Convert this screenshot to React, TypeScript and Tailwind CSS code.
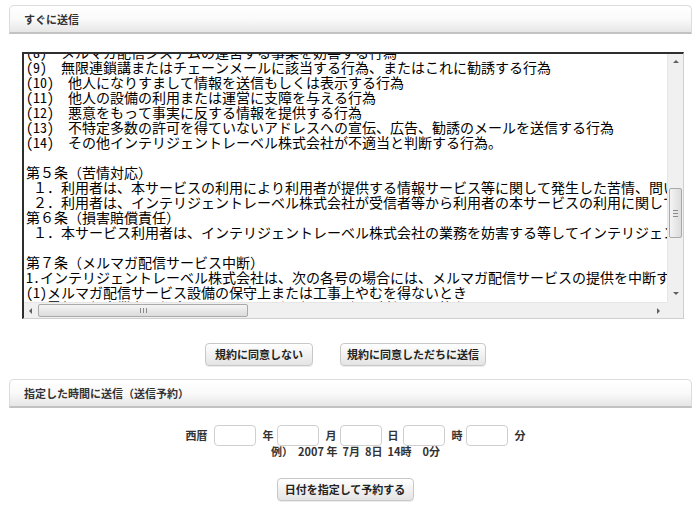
import React from 'react'

const lines: string[] = [
  '(8)　メルマガ配信システムの運営する事業を妨害する行為',
  '(9)　無限連鎖講またはチェーンメールに該当する行為、またはこれに勧誘する行為',
  '(10)　他人になりすまして情報を送信もしくは表示する行為',
  '(11)　他人の設備の利用または運営に支障を与える行為',
  '(12)　悪意をもって事実に反する情報を提供する行為',
  '(13)　不特定多数の許可を得ていないアドレスへの宣伝、広告、勧誘のメールを送信する行為',
  '(14)　その他インテリジェントレーベル株式会社が不適当と判断する行為。',
  '',
  '第５条（苦情対応）',
  ' １．利用者は、本サービスの利用により利用者が提供する情報サービス等に関して発生した苦情、問い合わせ等については、自らの責任で対応するものとします。',
  ' ２．利用者は、インテリジェントレーベル株式会社が受信者等から利用者の本サービスの利用に関して苦情を受けた場合には、これに協力するものとします。',
  '第６条（損害賠償責任）',
  ' １．本サービス利用者は、インテリジェントレーベル株式会社の業務を妨害する等してインテリジェントレーベル株式会社に損害を与えた場合には、その損害を賠償するものとします。',
  '',
  '第７条（メルマガ配信サービス中断）',
  '1.インテリジェントレーベル株式会社は、次の各号の場合には、メルマガ配信サービスの提供を中断することがあります。',
  '(1)メルマガ配信サービス設備の保守上または工事上やむを得ないとき',
  '(2)電気通信事業者の都合によりメルマガ配信サービスが利用不可能なとき',
]

const SectionHeader = ({ title }: { title: string }) => (
  <div className="ml-[9px] mr-[8px] h-[29px] flex items-center pl-[14px] rounded-t-[5px] border border-[#dcdcdc] border-b-2 border-b-[#c2c2c2] bg-linear-to-b from-white via-[#fafafa] to-[#e6e6e6] text-[11px] font-bold text-[#333]">
    {title}
  </div>
)

const Arrow = ({ dir }: { dir: 'up' | 'down' | 'left' | 'right' }) => {
  const pts = {
    up: '1,5 4,2 7,5',
    down: '1,2 4,5 7,2',
    left: '5,1 2,4 5,7',
    right: '2,1 5,4 2,7',
  }[dir]
  return (
    <svg width="8" height="8" viewBox="0 0 8 8">
      <polygon points={pts} fill="#606060" />
    </svg>
  )
}

const Button = ({ label, width }: { label: string; width: string }) => (
  <button
    className={`${width} h-[23px] rounded-[4px] border border-[#c8c8c8] bg-linear-to-b from-white to-[#e4e4e4] text-[11px] font-bold text-[#222] shadow-[0_1px_0_#ececec] flex items-center justify-center`}
  >
    {label}
  </button>
)

const DateInput = () => (
  <input className="w-[42px] h-[21px] rounded-[4px] border border-[#cfcfcf] bg-white outline-none" />
)

export default function App() {
  return (
    <div className="w-[700px] h-[511px] bg-white pt-[5px] font-['Noto_Sans_CJK_JP',sans-serif] text-[#333] overflow-hidden">
      <SectionHeader title="すぐに送信" />

      {/* 規約 textarea */}
      <div className="ml-[22px] mt-[18px] w-[662px] h-[267px] border-t-2 border-l-2 border-t-[#2e2e2e] border-l-[#2e2e2e] border-r border-b border-r-[#cfcfcf] border-b-[#cfcfcf] grid grid-cols-[1fr_16px] grid-rows-[1fr_16px] bg-white">
        <div className="overflow-hidden pl-[2px]">
          <div className="mt-[-9px] text-[14px] leading-[15px] text-black whitespace-pre font-['Noto_Sans_Mono_CJK_JP','Noto_Sans_CJK_JP',sans-serif]">
            {lines.map((l, i) => (
              <div key={i} className="h-[15px]">
                {l}
              </div>
            ))}
          </div>
        </div>

        {/* vertical scrollbar */}
        <div className="flex flex-col bg-[#f0f0f0] border-l border-[#e6e6e6]">
          <div className="h-[16px] flex items-center justify-center">
            <Arrow dir="up" />
          </div>
          <div className="h-[118px]" />
          <div className="h-[50px] mx-[1px] rounded-[2px] border border-[#a9a9a9] bg-linear-to-r from-[#f4f4f4] to-[#dcdcdc] flex items-center justify-center">
            <div className="flex flex-col gap-[2px]">
              <div className="w-[5px] h-px bg-[#8a8a8a]" />
              <div className="w-[5px] h-px bg-[#8a8a8a]" />
              <div className="w-[5px] h-px bg-[#8a8a8a]" />
            </div>
          </div>
          <div className="flex-1" />
          <div className="h-[16px] flex items-center justify-center">
            <Arrow dir="down" />
          </div>
        </div>

        {/* horizontal scrollbar */}
        <div className="flex bg-[#f0f0f0] border-t border-[#e6e6e6]">
          <div className="w-[14px] flex items-center justify-center">
            <Arrow dir="left" />
          </div>
          <div className="w-[210px] my-[1px] rounded-[2px] border border-[#a9a9a9] bg-linear-to-b from-[#f4f4f4] to-[#dcdcdc] flex items-center justify-center">
            <div className="flex gap-[2px]">
              <div className="w-px h-[5px] bg-[#8a8a8a]" />
              <div className="w-px h-[5px] bg-[#8a8a8a]" />
              <div className="w-px h-[5px] bg-[#8a8a8a]" />
            </div>
          </div>
          <div className="flex-1" />
          <div className="w-[16px] flex items-center justify-center">
            <Arrow dir="right" />
          </div>
        </div>
        <div className="bg-[#f0f0f0]" />
      </div>

      <div className="mt-[24px] flex justify-center gap-[27px] pr-[9px]">
        <Button label="規約に同意しない" width="w-[108px]" />
        <Button label="規約に同意しただちに送信" width="w-[146px]" />
      </div>

      <div className="mt-[13px]">
        <SectionHeader title="指定した時間に送信（送信予約）" />
      </div>

      <div className="mt-[17px] flex items-center justify-center pl-[11px] text-[11px] font-bold text-[#333]">
        <span className="mr-[6px]">西暦</span>
        <DateInput />
        <span className="ml-[7px] mr-[3px]">年</span>
        <DateInput />
        <span className="ml-[7px] mr-[3px]">月</span>
        <DateInput />
        <span className="ml-[6px] mr-[4px]">日</span>
        <DateInput />
        <span className="ml-[7px] mr-[3px]">時</span>
        <DateInput />
        <span className="ml-[7px]">分</span>
      </div>
      <div className="mt-[-3px] flex justify-center pl-[11px] text-[11px] font-bold text-[#333] leading-[16px] whitespace-pre">
        例）  2007 年  7月  8日  14時　0分
      </div>

      <div className="mt-[19px] flex justify-center pr-[10px]">
        <Button label="日付を指定して予約する" width="w-[137px]" />
      </div>
    </div>
  )
}
